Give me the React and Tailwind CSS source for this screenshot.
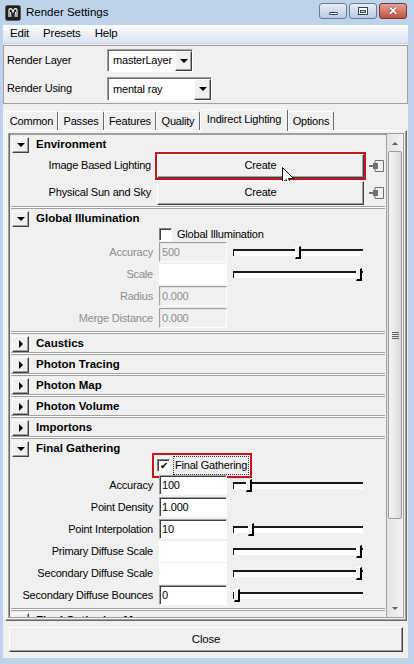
import React from "react";

const raised =
  "bg-[#f0f0f0] border border-t-white border-l-white border-r-[#404040] border-b-[#404040] shadow-[inset_-1px_-1px_0_#a0a0a0]";

function DownTri() {
  return <div className="w-0 h-0 border-l-[4px] border-r-[4px] border-t-[4px] border-l-transparent border-r-transparent border-t-black" />;
}

function RightTri() {
  return <div className="w-0 h-0 border-t-[4px] border-b-[4px] border-l-[4px] border-t-transparent border-b-transparent border-l-black" />;
}

function ExpandButton({ open }) {
  return (
    <div className={`w-[17px] h-[16px] flex items-center justify-center shrink-0 ${raised}`}>
      {open ? <DownTri /> : <RightTri />}
    </div>
  );
}

function Header({ title, open }) {
  return (
    <div className="h-[18px] flex items-center pl-[1px] pt-[1px]">
      <ExpandButton open={open} />
      <span className="ml-[7px] font-bold text-[11.5px] tracking-normal">{title}</span>
    </div>
  );
}

function Section({ title, open, children }) {
  return (
    <div className="bg-[#f0f0f0] border-y border-[#a0a0a0]">
      <Header title={title} open={open} />
      {children}
    </div>
  );
}

function Field({ value, dim, blank }) {
  if (blank) return <div className="w-[68px] h-[21px] bg-white" />;
  return (
    <div
      className={`w-[68px] h-[20px] flex items-center pl-[2px] border border-t-[#a0a0a0] border-l-[#a0a0a0] border-b-white border-r-white ${
        dim ? "bg-[#f0f0f0] text-[#8d8d8d] shadow-[inset_1px_1px_0_#e3e3e3]" : "bg-white shadow-[inset_1px_1px_0_#404040]"
      }`}
    >
      {value}
    </div>
  );
}

function Slider({ at }) {
  return (
    <div className="relative w-[130px] h-[7px] border-t-2 border-l border-[#1a1a1a] bg-white">
      <div
        className="absolute top-[-5px] w-[6px] h-[13px] bg-[#f0f0f0] border-l border-t border-white border-r-2 border-b-2 border-r-black border-b-black"
        style={{ left: at }}
      />
    </div>
  );
}

function Row({ label, dim, value, blank, slider }) {
  return (
    <div className="h-[22px] flex items-center">
      <div className={`w-[142px] text-right ${dim ? "text-[#8d8d8d]" : ""}`}>{label}</div>
      <div className="ml-[6px]">
        {value !== undefined || blank ? <Field value={value} dim={dim} blank={blank} /> : null}
      </div>
      {slider !== undefined && (
        <div className="ml-[6px]">
          <Slider at={slider} />
        </div>
      )}
    </div>
  );
}

function Checkbox({ checked }) {
  return (
    <div className="w-[13px] h-[13px] bg-white border border-t-[#808080] border-l-[#808080] border-b-white border-r-white shadow-[inset_1px_1px_0_#404040] flex items-center justify-center text-[10px] leading-none">
      {checked ? "✔" : ""}
    </div>
  );
}

function ConnectIcon() {
  return (
    <svg width="16" height="14" viewBox="0 0 16 14" className="shrink-0">
      <path d="M6 1.5H14.5V12.5H6" fill="none" stroke="#707070" />
      <path d="M6 1.5V4M6 10V12.5" fill="none" stroke="#707070" />
      <rect x="0" y="6" width="4" height="2" fill="#707070" />
      <rect x="4" y="4" width="5" height="6" fill="#707070" />
    </svg>
  );
}

function Cursor() {
  return (
    <svg width="12" height="20" viewBox="0 0 12 20" className="absolute left-[124px] top-[12px]">
      <path d="M0.5 0.5V16L4 12.5L6.5 18.5L9 17.5L6.5 11.5H11.5Z" fill="white" stroke="black" />
    </svg>
  );
}

function CreateButton({ highlight }) {
  return (
    <div
      className={`relative w-[207px] h-[24px] flex items-center justify-center ${raised} ${
        highlight ? "outline-2 outline-[#c4161c] shadow-[0_1px_3px_rgba(0,0,0,0.35)]" : ""
      }`}
    >
      Create
      {highlight && <Cursor />}
    </div>
  );
}

function TitleButton({ children, close }) {
  return (
    <div
      className={`w-[28px] h-[16px] rounded-[3px] border flex items-center justify-center ${
        close
          ? "border-[#6b3a35] bg-gradient-to-b from-[#e3a396] to-[#c1503f]"
          : "border-[#6d7b8f] bg-gradient-to-b from-[#e6eef8] to-[#b9cbe2]"
      }`}
    >
      {children}
    </div>
  );
}

function Tab({ label, w, active }) {
  return (
    <div
      className={`${w} flex items-center justify-center border border-t-white border-l-white border-b-0 border-r-[#696969] rounded-t-[2px] ${
        active ? "h-[22px] bg-[#f0f0f0] relative z-10 -mb-[1px] pb-[3px]" : "h-[19px] bg-[#f0f0f0]"
      }`}
    >
      {label}
    </div>
  );
}

export default function App() {
  return (
    <div className="w-[414px] h-[664px] bg-[#bcd3ea] flex flex-col overflow-hidden text-[11px] tracking-[-0.2px] text-black font-['Liberation_Sans',Arial,sans-serif]">
      {/* title bar */}
      <div className="h-[25px] flex items-center shrink-0">
        <svg width="16" height="16" viewBox="0 0 16 16" className="ml-[5px]">
          <rect x="0.5" y="0.5" width="15" height="15" rx="2" fill="#1f1f1f" stroke="#5a5a5a" />
          <path d="M4 12V5C4 3.5 6 3 7 4.5L8 7L9 4.5C10 3 12 3.5 12 5V12" fill="none" stroke="white" strokeWidth="1.2" />
          <path d="M6 12L5.5 7M10 12L10.5 7" fill="none" stroke="white" strokeWidth="1" />
        </svg>
        <span className="ml-[5px] text-[11.5px] tracking-normal">Render Settings</span>
        <div className="ml-auto mr-[7px] flex gap-[2px] mt-[-3px]">
          <TitleButton>
            <div className="mt-[5px] w-[9px] h-[3px] bg-white border border-[#394457] rounded-[1px]" />
          </TitleButton>
          <TitleButton>
            <div className="w-[10px] h-[8px] border border-[#394457] bg-white flex items-center justify-center">
              <div className="w-[6px] h-[3px] border border-[#394457] bg-[#c9d7ea]" />
            </div>
          </TitleButton>
          <TitleButton close>
            <span className="text-white font-bold text-[12px] leading-none [text-shadow:0_0_1px_#3a1a16,0_0_1px_#3a1a16]">✕</span>
          </TitleButton>
        </div>
      </div>

      {/* window body */}
      <div className="ml-[3px] mr-[6px] h-[633px] bg-[#f0f0f0] flex flex-col">
        <div className="h-[19px] flex items-center gap-[14px] pl-[7px] text-[11.5px] bg-gradient-to-b from-[#fbfcfe] to-[#dbe4f2] border-b border-[#c9d5e6]">
          <span>Edit</span>
          <span>Presets</span>
          <span>Help</span>
        </div>

        <div className="mt-[1px] h-[59px] border border-[#a0a0a0] pl-[3px] pt-[2px] flex flex-col gap-[4px]">
          <div className="h-[24px] flex items-center">
            <div className="w-[100px]">Render Layer</div>
            <div className="h-[23px] w-[86px] flex border border-t-[#a0a0a0] border-l-[#a0a0a0] border-b-white border-r-white bg-white shadow-[inset_1px_1px_0_#696969]">
              <div className="flex-1 flex items-center pl-[5px] pt-[1px]">masterLayer</div>
              <div className={`w-[17px] mt-[1px] flex items-center justify-center ${raised}`}>
                <DownTri />
              </div>
            </div>
          </div>
          <div className="h-[25px] flex items-center">
            <div className="w-[100px]">Render Using</div>
            <div className="h-[24px] w-[105px] flex border border-t-[#a0a0a0] border-l-[#a0a0a0] border-b-white border-r-white bg-white shadow-[inset_1px_1px_0_#696969]">
              <div className="flex-1 flex items-center pl-[5px] pt-[1px]">mental ray</div>
              <div className={`w-[17px] mt-[1px] flex items-center justify-center ${raised}`}>
                <DownTri />
              </div>
            </div>
          </div>
        </div>

        {/* tabs */}
        <div className="mt-[5px] h-[21px] flex items-end ml-[2px]">
          <Tab label="Common" w="w-[53px]" />
          <Tab label="Passes" w="w-[46px]" />
          <Tab label="Features" w="w-[52px]" />
          <Tab label="Quality" w="w-[44px]" />
          <Tab label="Indirect Lighting" w="w-[88px]" active />
          <Tab label="Options" w="w-[46px]" />
        </div>

        <div className="h-[491px] ml-[2px] mr-[1px] border border-t-white border-l-white border-r-[#696969] border-b-[#696969] shadow-[inset_-1px_-1px_0_#a0a0a0] p-[2px] flex">
          <div className="flex-1 flex border border-[#a0a0a0] shadow-[inset_1px_1px_0_#696969] overflow-hidden pl-[2px]">
            <div className="flex-1 flex flex-col gap-px bg-white overflow-hidden">
              <Section title="Environment" open>
                <div className="flex flex-col gap-[2px] pb-[1px]">
                  <div className="h-[25px] flex items-center">
                    <div className="w-[142px] text-right">Image Based Lighting</div>
                    <div className="ml-[6px]">
                      <CreateButton highlight />
                    </div>
                    <div className="ml-[5px]">
                      <ConnectIcon />
                    </div>
                  </div>
                  <div className="h-[25px] flex items-center">
                    <div className="w-[142px] text-right">Physical Sun and Sky</div>
                    <div className="ml-[6px]">
                      <CreateButton />
                    </div>
                    <div className="ml-[5px]">
                      <ConnectIcon />
                    </div>
                  </div>
                </div>
              </Section>

              <Section title="Global Illumination" open>
                <div className="h-[14px] flex items-center pl-[148px] gap-[5px]">
                  <Checkbox />
                  <span>Global Illumination</span>
                </div>
                <div className="pb-[2px]">
                  <Row label="Accuracy" dim value="500" slider={61} />
                  <Row label="Scale" dim blank slider={122} />
                  <Row label="Radius" dim value="0.000" />
                  <Row label="Merge Distance" dim value="0.000" />
                </div>
              </Section>

              <Section title="Caustics" />
              <Section title="Photon Tracing" />
              <Section title="Photon Map" />
              <Section title="Photon Volume" />
              <Section title="Importons" />

              <Section title="Final Gathering" open>
                <div className="h-[17px] flex items-center pl-[143px]">
                  <div className="flex items-center gap-[4px] pl-[3px] pr-[2px] py-[2px] outline-2 outline-[#c4161c] shadow-[0_1px_3px_rgba(0,0,0,0.3)]">
                    <Checkbox checked />
                    <span className="outline outline-dotted outline-[#333] px-[1px]">Final Gathering</span>
                  </div>
                </div>
                <div className="pb-[2px]">
                  <Row label="Accuracy" value="100" slider={12} />
                  <Row label="Point Density" value="1.000" />
                  <Row label="Point Interpolation" value="10" slider={14} />
                  <Row label="Primary Diffuse Scale" blank slider={122} />
                  <Row label="Secondary Diffuse Scale" blank slider={122} />
                  <Row label="Secondary Diffuse Bounces" value="0" slider={0} />
                </div>
              </Section>

              <Section title="Final Gathering Map" />
            </div>

            {/* scrollbar */}
            <div className="w-[17px] ml-[1px] flex flex-col bg-gradient-to-r from-[#e3e3e3] to-[#f3f3f3] border-l border-[#a0a0a0]">
              <div className="h-[17px] flex items-center justify-center pt-[2px]">
                <div className="w-0 h-0 border-l-[3px] border-r-[3px] border-b-[3px] border-l-transparent border-r-transparent border-b-[#606060]" />
              </div>
              <div className="h-[368px] mx-[1px] rounded-[2px] border border-[#9b9b9b] bg-gradient-to-r from-[#f4f4f4] via-[#e9e9e9] to-[#d8d8d8] flex flex-col items-center justify-center gap-[1px]">
                <div className="w-[7px] h-px bg-[#606060]" />
                <div className="w-[7px] h-px bg-[#606060]" />
                <div className="w-[7px] h-px bg-[#606060]" />
                <div className="w-[7px] h-px bg-[#606060]" />
              </div>
              <div className="flex-1" />
              <div className="h-[17px] flex items-center justify-center">
                <div className="w-0 h-0 border-l-[3px] border-r-[3px] border-t-[3px] border-l-transparent border-r-transparent border-t-[#606060]" />
              </div>
            </div>
          </div>
        </div>

        <div className={`mt-[6px] ml-[6px] mr-[5px] h-[25px] flex items-center justify-center text-[11.5px] ${raised}`}>
          Close
        </div>
      </div>
    </div>
  );
}
